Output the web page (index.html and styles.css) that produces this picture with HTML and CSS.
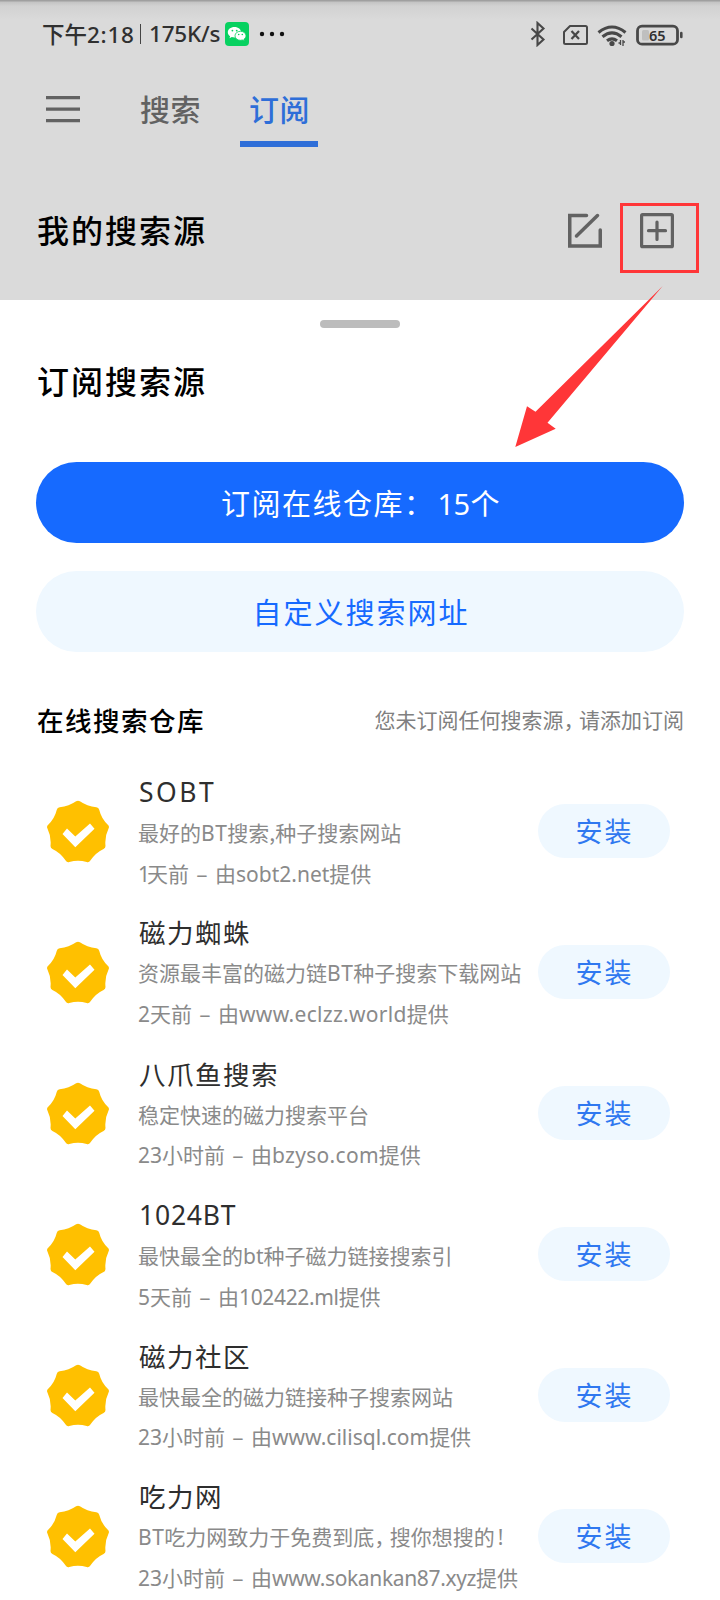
FILE: index.html
```html
<!DOCTYPE html>
<html lang="zh-CN">
<head>
<meta charset="utf-8">
<title>订阅搜索源</title>
<link rel="stylesheet" href="styles.css">
</head>
<body>
<svg class="defs" width="0" height="0">
  <symbol id="badge" viewBox="-32 -32 64 64">
    <path fill="#ffc000" stroke="#ffc000" stroke-width="6.6" stroke-linejoin="round" d="M0-28Q7.7-22.600 18-21.4Q20.500-11.3 27.6-4.9Q23.200 3.9 24.2 14Q15.200 18.200 9.6 26.8Q0 24-9.6 26.8Q-15.200 18.200-24.2 14Q-23.200 3.9-27.6-4.9Q-20.500-11.3-18-21.4Q-7.7-22.600 0-28Z"/>
    <path fill="#fff" d="M-15.5 2L-11-3.5L-2.7 4.5L12-8.5L16.5-3.3L-2.7 15.2Z"/>
  </symbol>
</svg>
<div class="screen">
  <header class="backdrop">
    <div class="status">
      <div class="status-left">
        <span class="clock">下午<span class="latin time">2:18</span></span><i class="divider"></i><span class="latin speed">175K/s</span>
        <svg class="wechat" width="24" height="24" viewBox="0 0 24 24"><rect width="24" height="24" rx="4" fill="#07d160"/><path fill="#fff" d="M9.5 5C5.600 5 2.800 7.300 2.800 10.200c0 1.700.9 3.100 2.300 4.100l-.6 2 2.300-1.200c.8.2 1.700.3 2.700.3 3.800 0 6.600-2.300 6.600-5.200S13.300 5 9.500 5z"/><path fill="#fff" stroke="#07d160" stroke-width=".8" d="M15.500 9.300c-3.200 0-5.500 2-5.500 4.500s2.300 4.500 5.500 4.500c.7 0 1.300-.1 1.900-.3l2 1.100-.5-1.800c1.300-.8 2.100-2.100 2.100-3.500 0-2.500-2.300-4.500-5.500-4.500z"/><g fill="#07d160"><circle cx="7.400" cy="8.600" r=".9"/><circle cx="11.700" cy="8.600" r=".9"/><circle cx="13.700" cy="12.500" r=".8"/><circle cx="17.300" cy="12.500" r=".8"/></g></svg>
        <svg class="dots" width="26" height="6" viewBox="0 0 26 6" fill="#111"><circle cx="3" cy="3" r="2.200"/><circle cx="13" cy="3" r="2.200"/><circle cx="23" cy="3" r="2.200"/></svg>
      </div>
      <svg class="status-icons" width="154" height="26" viewBox="0 0 154 26" fill="none" stroke="#484848">
        <path stroke-width="2.100" d="M1.500 7.500L13.500 18.500L7.500 24V2L13.500 7.500L1.500 18.500"/>
        <path stroke-width="2" stroke-linejoin="round" d="M40 5H55.500Q57 5 57 6.500V21.500Q57 23 55.500 23H35.500Q34 23 34 21.500V11Z"/>
        <path stroke-width="2.200" d="M41.500 10L49 18M49 10L41.500 18"/>
        <g stroke-width="3.100"><path d="M68.500 11.500Q82 .5 95.500 11.500"/><path d="M72.500 15.700Q82 8 91.500 15.700"/><path d="M77 19.700Q82 16 87 19.700"/></g>
        <circle cx="82" cy="22.500" r="2.600" fill="#484848" stroke="none"/>
        <path stroke-width="1.300" d="M90.500 19v5M93 19v6M88.500 22h2M93 21h2"/>
        <rect x="107.500" y="5.200" width="40" height="18" rx="4.500" stroke-width="2.800"/>
        <rect x="112" y="9" width="7" height="10.500" rx="1.500" fill="#bfbfbf" stroke="none"/>
        <path stroke-width="2.600" stroke-linecap="round" d="M151.300 12v4"/>
        <text class="battery" x="127.300" y="19.500" text-anchor="middle">65</text>
      </svg>
    </div>
    <nav class="tabs">
      <svg class="menu" width="34" height="27" viewBox="0 0 34 27"><path stroke="#626262" stroke-width="3.200" d="M0 1.700H34M0 13.200H34M0 24.700H34"/></svg>
      <span class="tab">搜索</span>
      <span class="tab active">订阅</span>
    </nav>
    <div class="source-head">
      <h1 class="heading">我的搜索源</h1>
      <div class="actions">
        <svg width="34" height="36" viewBox="0 0 34 36" fill="none" stroke="#626262" stroke-width="3.500" stroke-linecap="round" stroke-linejoin="miter"><path d="M18.500 2.500H1.750V33H32.250V17"/><path d="M8.500 23L29.500 2.500"/></svg>
        <svg width="34" height="36" viewBox="0 0 34 36" fill="none" stroke="#626262" stroke-width="3.200"><rect x="1.600" y="1.700" width="30.800" height="32" rx="1"/><path stroke-linecap="round" d="M8.500 17.700H25.500M17 9V26.500"/></svg>
      </div>
    </div>
  </header>

  <main class="sheet">
    <i class="handle"></i>
    <h2 class="heading sheet-title">订阅搜索源</h2>
    <div class="buttons">
      <button class="big primary">订阅在线仓库：<span class="latin count">15</span>个</button>
      <button class="big secondary">自定义搜索网址</button>
    </div>
    <div class="list-head">
      <h3>在线搜索仓库</h3>
      <span class="hint">您未订阅任何搜索源<span class="comma">，</span>请添加订阅</span>
    </div>
    <ul class="list">
      <li class="item"><svg class="badge"><use href="#badge"/></svg><div class="info"><b class="name"><span class="latin extra-wide">SOBT</span></b><p>最好的<span class="latin wide">BT</span>搜索,种子搜索网站</p><p><span class="latin digit-one">1</span>天前<span class="dash">–</span>由<span class="latin">sobt2.net</span>提供</p></div><button class="install">安装</button></li>
      <li class="item"><svg class="badge"><use href="#badge"/></svg><div class="info"><b class="name">磁力蜘蛛</b><p>资源最丰富的磁力链<span class="latin wide">BT</span>种子搜索下载网站</p><p><span class="latin">2</span>天前<span class="dash">–</span>由<span class="latin loose">www.eclzz.world</span>提供</p></div><button class="install">安装</button></li>
      <li class="item"><svg class="badge"><use href="#badge"/></svg><div class="info"><b class="name">八爪鱼搜索</b><p>稳定快速的磁力搜索平台</p><p><span class="latin">23</span>小时前<span class="dash">–</span>由<span class="latin loose">bzyso.com</span>提供</p></div><button class="install">安装</button></li>
      <li class="item"><svg class="badge"><use href="#badge"/></svg><div class="info"><b class="name"><span class="latin narrow">1024BT</span></b><p>最快最全的<span class="latin">bt</span>种子磁力链接搜索引</p><p><span class="latin">5</span>天前<span class="dash">–</span>由<span class="latin tight">102422.ml</span>提供</p></div><button class="install">安装</button></li>
      <li class="item"><svg class="badge"><use href="#badge"/></svg><div class="info"><b class="name">磁力社区</b><p>最快最全的磁力链接种子搜索网站</p><p><span class="latin">23</span>小时前<span class="dash">–</span>由<span class="latin">www.cilisql.com</span>提供</p></div><button class="install">安装</button></li>
      <li class="item"><svg class="badge"><use href="#badge"/></svg><div class="info"><b class="name">吃力网</b><p><span class="latin wide">BT</span>吃力网致力于免费到底<span class="comma">，</span>搜你想搜的<span class="latin mark">!</span></p><p><span class="latin">23</span>小时前<span class="dash">–</span>由<span class="latin tight">www.sokankan87.xyz</span>提供</p></div><button class="install">安装</button></li>
    </ul>
  </main>

  <svg class="annotation" width="200" height="250" viewBox="510 200 200 250">
    <rect x="621.500" y="204.500" width="76" height="67" fill="none" stroke="#ff3638" stroke-width="3"/>
    <path fill="#ff3638" d="M515.300 447L527 406.300L535.500 411.700L662.700 286L547.500 422.700L555.700 428.700Z"/>
  </svg>
</div>
</body>
</html>
```
FILE: styles.css
```css
* { box-sizing: border-box; margin: 0; padding: 0; }
body {
  background: #fff;
  color: #000;
  font-family: "Noto Sans CJK SC", sans-serif;
}
button { border: 0; font-family: inherit; }
.defs { position: absolute; }
.screen {
  position: relative;
  width: 720px;
  height: 1600px;
  overflow: hidden;
}
.backdrop {
  height: 300px;
  background: linear-gradient(#a0a0a0 0 1px, #c4c4c4 2px, #d2d2d2 6px, #dadada 20px);
}

/* Latin runs and their tracking */
.latin { font-family: "Noto Sans", "Noto Sans CJK SC", sans-serif; }
.loose { letter-spacing: .3px; }
.tight { letter-spacing: -.35px; }
.wide { letter-spacing: .5px; }
.extra-wide { letter-spacing: 2.500px; }
.narrow { letter-spacing: .8px; }
.digit-one { letter-spacing: -3px; }

/* Status bar */
.status {
  display: flex;
  justify-content: space-between;
  align-items: center;
  height: 68px;
  padding: 0 36px 0 42px;
}
.status-left {
  display: flex;
  align-items: center;
  height: 24px;
  font-size: 22.500px;
  font-weight: 500;
  line-height: 24px;
  color: #303030;
}
.clock { width: 94px; white-space: nowrap; }
.time { letter-spacing: .7px; }
.divider { width: 1px; height: 20px; margin: 0 8px 0 4px; background: #444; }
.speed { width: 76px; white-space: nowrap; letter-spacing: -.2px; }
.dots { margin-left: 10px; }
.battery {
  font: 600 14.500px "Noto Sans", sans-serif;
  fill: #303030;
  stroke: none;
}

/* Tabs */
.tabs {
  display: flex;
  height: 79px;
  padding-left: 46px;
}
.menu { margin: 28px 48px 0 0; }
.tab {
  width: 78px;
  padding-left: 12px;
  font-size: 30px;
  font-weight: 500;
  letter-spacing: .5px;
  line-height: 81px;
  white-space: nowrap;
  color: #626262;
}
.tab + .tab { margin-left: 34px; padding-left: 9px; }
.tab.active { color: #2e6ed8; border-bottom: 6px solid #2e6ed8; }

.source-head {
  display: flex;
  justify-content: space-between;
  padding: 56px 46px 0 37px;
}
.heading {
  font-size: 32px;
  font-weight: 500;
  letter-spacing: 2px;
  line-height: 52px;
}
.actions { display: flex; gap: 38px; padding-top: 10px; }

/* Bottom sheet */
.sheet { padding: 20px 36px 0; }
.handle {
  display: block;
  width: 80px;
  height: 8px;
  margin: 0 auto;
  border-radius: 4px;
  background: #bcbcbc;
}
.sheet-title { margin-top: 26px; padding-left: 1px; }
.buttons { display: flex; flex-direction: column; gap: 28px; margin-top: 56px; }
.big {
  height: 81px;
  padding: 0 0 1px 2px;
  border-radius: 41px;
  font-size: 29px;
  letter-spacing: 1.500px;
  line-height: 80px;
}
.primary { background: #166aff; color: #fff; }
.secondary { background: #eff8ff; color: #166aff; letter-spacing: 2px; }
.count { margin-left: 3px; letter-spacing: -.7px; margin-right: 1px; }

.list-head {
  display: flex;
  justify-content: space-between;
  align-items: center;
  height: 40px;
  margin-top: 47px;
  padding-left: 1px;
}
.list-head h3 {
  font-size: 26.500px;
  font-weight: 500;
  letter-spacing: 1.500px;
}
.hint { font-size: 21px; color: #808080; }
.comma { letter-spacing: -5.500px; }
.mark { margin-left: 3px; }

/* Source list */
.list { margin-top: 22px; list-style: none; }
.item {
  display: flex;
  align-items: center;
  height: 141px;
  padding: 0 14px 0 10px;
}
.badge { flex: none; width: 64px; height: 64px; }
.info {
  flex: 1;
  padding: 1px 0 0 28px;
  white-space: nowrap;
}
.name {
  display: block;
  padding-left: 1px;
  font-size: 26.500px;
  font-weight: 400;
  letter-spacing: 1.500px;
  line-height: 42px;
  color: #2e2e2e;
}
.info p { font-size: 21px; line-height: 39.600px; color: #8a8a8a; }
.dash {
  display: inline-block;
  width: 26px;
  font-weight: 500;
  text-align: center;
}
.install {
  flex: none;
  width: 132px;
  height: 54px;
  margin-bottom: 2px;
  padding-left: 1px;
  border-radius: 27px;
  background: #eff8ff;
  color: #2f78f0;
  font-size: 27px;
  letter-spacing: 2px;
  line-height: 54px;
}

/* Red callout over the page */
.annotation { position: absolute; left: 510px; top: 200px; }
```
